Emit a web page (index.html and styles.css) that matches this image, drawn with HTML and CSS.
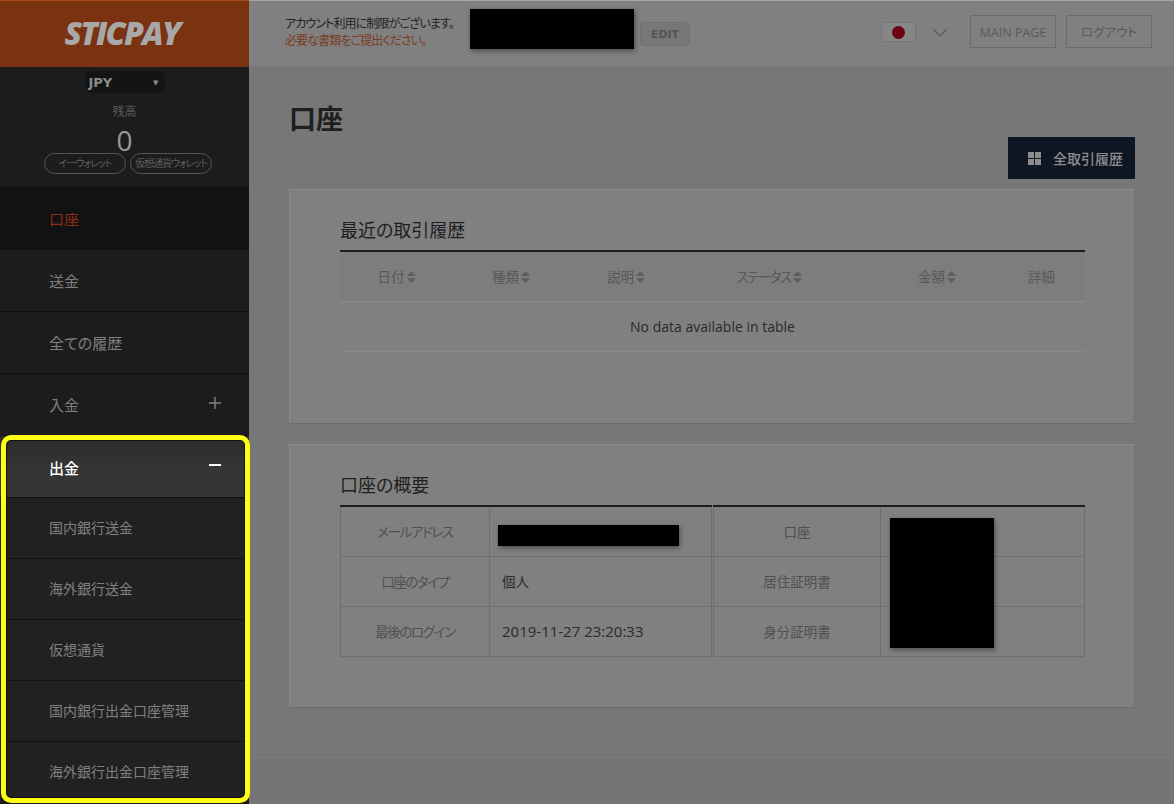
FILE: index.html
```html
<!DOCTYPE html>
<html lang="ja">
<head>
    <meta charset="UTF-8">
    <title>STICPAY 口座</title>
    <link rel="stylesheet" href="styles.css">
</head>
<body>
    <div class="page">
        <aside class="sidebar">
            <div class="logo"><span>STICPAY</span></div>
            <div class="wallet">
                <div class="currency"><span>JPY</span><i>▼</i></div>
                <div class="balance-label">残高</div>
                <div class="balance">0</div>
                <div class="wallet-pills">
                    <span class="pill">イーウォレット</span>
                    <span class="pill">仮想通貨ウォレット</span>
                </div>
            </div>
            <nav class="nav">
                <a class="nav-item active">口座</a>
                <a class="nav-item">送金</a>
                <a class="nav-item">全ての履歴</a>
                <a class="nav-item">入金<svg class="nav-sign" viewBox="0 0 14 14"><path d="M7 1v12M1 7h12"/></svg></a>
                <div class="nav-group">
                    <a class="nav-item open">出金<svg class="nav-sign minus" viewBox="0 0 14 14"><path d="M1 7h12"/></svg></a>
                    <a class="nav-item sub">国内銀行送金</a>
                    <a class="nav-item sub">海外銀行送金</a>
                    <a class="nav-item sub">仮想通貨</a>
                    <a class="nav-item sub">国内銀行出金口座管理</a>
                    <a class="nav-item sub">海外銀行出金口座管理</a>
                </div>
            </nav>
        </aside>

        <div class="main">
            <header class="topbar">
                <div class="notice">
                    <p>アカウント利用に制限がございます。</p>
                    <p class="notice-red">必要な書類をご提出ください。</p>
                </div>
                <div class="blackout top-name"></div>
                <button class="edit-btn">EDIT</button>
                <div class="topbar-right">
                    <div class="flag"><span></span></div>
                    <svg class="chevron" viewBox="0 0 16 9"><path d="M1 1l7 7 7-7"/></svg>
                    <a class="top-btn">MAIN PAGE</a>
                    <a class="top-btn">ログアウト</a>
                </div>
            </header>

            <section class="content">
                <h1>口座</h1>
                <div class="actions">
                    <a class="history-btn">
                        <svg viewBox="0 0 13 13"><path d="M0 0h6v6H0zM7 0h6v6H7zM0 7h6v6H0zM7 7h6v6H7z"/></svg>
                        全取引履歴
                    </a>
                </div>

                <div class="card recent">
                    <h2>最近の取引履歴</h2>
                    <table class="history">
                        <colgroup>
                            <col class="c1"><col class="c2"><col class="c3"><col class="c4"><col class="c5"><col class="c6">
                        </colgroup>
                        <thead>
                            <tr>
                                <th>日付<svg class="sort" viewBox="0 0 9 12"><path d="M4.5 0L9 5H0zM4.5 12L0 7h9z"/></svg></th>
                                <th>種類<svg class="sort" viewBox="0 0 9 12"><path d="M4.5 0L9 5H0zM4.5 12L0 7h9z"/></svg></th>
                                <th>説明<svg class="sort" viewBox="0 0 9 12"><path d="M4.5 0L9 5H0zM4.5 12L0 7h9z"/></svg></th>
                                <th class="status">ステータス<svg class="sort" viewBox="0 0 9 12"><path d="M4.5 0L9 5H0zM4.5 12L0 7h9z"/></svg></th>
                                <th>金額<svg class="sort" viewBox="0 0 9 12"><path d="M4.5 0L9 5H0zM4.5 12L0 7h9z"/></svg></th>
                                <th class="last">詳細</th>
                            </tr>
                        </thead>
                        <tbody>
                            <tr><td colspan="6">No data available in table</td></tr>
                        </tbody>
                    </table>
                </div>

                <div class="card summary">
                    <h2>口座の概要</h2>
                    <div class="summary-tables">
                        <table class="info left">
                            <tr><th>メールアドレス</th><td><div class="blackout mail"></div></td></tr>
                            <tr><th>口座のタイプ</th><td>個人</td></tr>
                            <tr><th>最後のログイン</th><td class="date">2019-11-27 23:20:33</td></tr>
                        </table>
                        <table class="info right">
                            <tr><th>口座</th><td></td></tr>
                            <tr><th>居住証明書</th><td></td></tr>
                            <tr><th>身分証明書</th><td></td></tr>
                        </table>
                        <div class="blackout docs"></div>
                    </div>
                </div>
            </section>
            <footer class="footer"></footer>
        </div>
    </div>
</body>
</html>
```

FILE: styles.css
```css
*, *::after {
    box-sizing: border-box;
}

body {
    margin: 0;
    height: 804px;
    overflow: hidden;
    background-color: #777;
    font-family: 'Open Sans', 'Noto Sans CJK JP', sans-serif;
    font-feature-settings: "palt";
    color: #222;
}

p, h1, h2 {
    margin: 0;
}

.page {
    display: flex;
    height: 804px;
}

/* sidebar */
.sidebar {
    width: 249px;
    flex-shrink: 0;
    background-color: #1c1c1c;
    color: #808080;
}

.logo {
    height: 67px;
    background-color: #7b3210;
    border-top: 1px solid #a8481a;
    padding: 0 5px 4px 0;
    display: flex;
    align-items: center;
    justify-content: center;
}

.logo span {
    font-family: 'Open Sans', sans-serif;
    font-weight: 800;
    font-style: italic;
    font-size: 32px;
    letter-spacing: -1.8px;
    color: #a8a8a8;
}

.wallet {
    height: 120px;
    padding-top: 4px;
    display: flex;
    flex-direction: column;
    align-items: center;
}

.currency {
    width: 80px;
    height: 22px;
    background-color: #141414;
    border-radius: 6px;
    padding: 1px 6px 0 4px;
    display: flex;
    align-items: center;
    justify-content: space-between;
    font-family: 'DejaVu Sans', sans-serif;
    font-size: 13px;
    font-weight: bold;
    color: #8c8c8c;
}

.currency i {
    font-style: normal;
    font-size: 7px;
}

.balance-label {
    margin-top: 10px;
    font-size: 12px;
    line-height: 18px;
    color: #5a5a5a;
}

.balance {
    margin-top: 5px;
    height: 27px;
    font-size: 28px;
    line-height: 28px;
    color: #999;
}

.wallet-pills {
    display: flex;
    gap: 4px;
    margin-left: 7px;
}

.pill {
    width: 82px;
    height: 21px;
    border: 1px solid #555;
    border-radius: 11px;
    font-size: 10px;
    letter-spacing: -1px;
    line-height: 19px;
    text-align: center;
    color: #5f5f5f;
    white-space: nowrap;
}

.nav-item {
    height: 62px;
    padding-left: 49px;
    display: flex;
    align-items: center;
    justify-content: space-between;
    border-bottom: 1px solid #111;
    font-size: 15px;
    color: #808080;
}

.nav-item.active {
    height: 63px;
    padding-top: 1px;
    background-color: #121212;
    color: #8c2c12;
}

.nav-sign {
    width: 14px;
    height: 14px;
    margin: -4px 27px 0 0;
    fill: none;
    stroke: #808080;
    stroke-width: 1.5;
}

.nav-sign.minus {
    margin-top: -6px;
    stroke: #fff;
    stroke-width: 2;
}

.nav-group {
    position: relative;
}

/* yellow frame drawn over the open group */
.nav-group::after {
    content: "";
    position: absolute;
    top: -1px;
    left: 1px;
    width: 249px;
    height: 368px;
    border: 5px solid #ffff14;
    border-radius: 10px;
    box-shadow: inset 0 0 0 1px #111;
}

.nav-item.open {
    height: 62px;
    padding-top: 2px;
    background: linear-gradient(#2a2a2a, #353535 50%);
    color: #fff;
    font-weight: 500;
}

.nav-item.sub {
    height: 61px;
    padding-bottom: 2px;
    background-color: #212121;
    font-size: 14px;
}

/* main column */
.main {
    flex: 1;
    display: flex;
    flex-direction: column;
    min-width: 0;
}

.topbar {
    height: 67px;
    flex-shrink: 0;
    background-color: #808080;
    border-top: 1px solid #a5a5a5;
    border-bottom: 1px solid #777;
    display: flex;
    align-items: flex-start;
    padding-left: 36px;
}

.notice {
    width: 185px;
    margin-top: 14px;
    font-size: 12px;
    letter-spacing: -0.9px;
    line-height: 17px;
    color: #222;
    white-space: nowrap;
}

.notice-red {
    color: #7b3a1e;
}

.blackout {
    background-color: #000;
    box-shadow: 1px 2px 5px rgba(0, 0, 0, 0.4);
}

.top-name {
    width: 164px;
    height: 40px;
    margin-top: 8px;
}

.edit-btn {
    width: 50px;
    height: 24px;
    margin: 21px 0 0 6px;
    padding: 1px 0 0;
    background-color: #777;
    border: 1px solid #707070;
    border-radius: 4px;
    font-family: 'DejaVu Sans', sans-serif;
    font-size: 11px;
    font-weight: bold;
    color: #555;
}

.topbar-right {
    margin-left: auto;
    margin-right: 22px;
    display: flex;
    align-items: flex-start;
}

.flag {
    width: 35px;
    height: 20px;
    margin-top: 21px;
    background-color: #868686;
    border: 1px solid #777;
    display: flex;
    align-items: center;
    justify-content: center;
}

.flag span {
    width: 13px;
    height: 13px;
    border-radius: 50%;
    background-color: #6a0410;
}

.chevron {
    width: 16px;
    height: 9px;
    margin: 27px 22px 0 16px;
    fill: none;
    stroke: #5f5f5f;
    stroke-width: 1.5;
}

.top-btn {
    width: 86px;
    height: 33px;
    margin-top: 14px;
    border: 1px solid #6b6b6b;
    font-size: 12.5px;
    line-height: 33px;
    text-align: center;
    color: #5a5a5a;
}

.top-btn + .top-btn {
    margin-left: 10px;
}

.content {
    flex: 1;
    padding: 0 39px 0 40px;
}

h1 {
    height: 70px;
    padding-top: 33px;
    font-size: 27px;
    line-height: 38px;
    font-weight: 700;
    color: #1f1f1f;
}

.actions {
    display: flex;
    justify-content: flex-end;
}

.history-btn {
    width: 127px;
    height: 42px;
    background-color: #0e1624;
    display: flex;
    align-items: center;
    padding-left: 20px;
    gap: 12px;
    font-size: 14px;
    font-weight: 500;
    color: #8d8d8d;
    white-space: nowrap;
}

.history-btn svg {
    width: 13px;
    height: 13px;
    fill: #8d8d8d;
}

.card {
    margin-top: 10px;
    background-color: #808080;
    border: 1px solid;
    border-color: #8a8a8a #727272 #6c6c6c #8a8a8a;
    padding: 0 50px;
}

.card.recent {
    height: 235px;
}

.card.summary {
    height: 264px;
    margin-top: 20px;
}

h2 {
    font-size: 18px;
    line-height: 27px;
    font-weight: 400;
    color: #1f1f1f;
    padding-top: 27px;
    height: 60px;
}

.recent table {
    width: 745px;
    border-collapse: collapse;
    table-layout: fixed;
    border-top: 2px solid #1e1e1e;
}

.c1 { width: 113px; }
.c2 { width: 116px; }
.c3 { width: 114px; }
.c4 { width: 172px; }
.c5 { width: 164px; }
.c6 { width: 66px; }

.history th {
    height: 50px;
    background-color: #7d7d7d;
    border-bottom: 1px solid #8a8a8a;
    font-size: 13.5px;
    font-weight: 400;
    color: #585858;
}

.history th.status {
    letter-spacing: -1.5px;
}

.history th.last {
    padding-right: 22px;
}

.sort {
    width: 9px;
    height: 12px;
    margin-left: 2px;
    vertical-align: -1px;
    fill: #5f5f5f;
}

.history td {
    height: 50px;
    border-bottom: 1px solid #8a8a8a;
    text-align: center;
    font-size: 14px;
    color: #2a2a2a;
}

.summary-tables {
    position: relative;
    display: flex;
    gap: 1px;
    width: 745px;
}

.info {
    border-collapse: collapse;
    border-top: 2px solid #1e1e1e;
    table-layout: fixed;
}

.info.left,
.info.right {
    width: 372px;
}

.info th,
.info td {
    height: 50px;
    border: 1px solid #6f6f6f;
    font-size: 13.5px;
    font-weight: 400;
}

.info tr:first-child th,
.info tr:first-child td {
    border-top: none;
}

.info th {
    color: #505050;
}

.info.left th {
    width: 149px;
    letter-spacing: -1.4px;
}

.info.right th {
    width: 167px;
}

.info td {
    padding-left: 12px;
    color: #2a2a2a;
}

.info td.date {
    font-size: 15px;
}

.blackout.mail {
    position: relative;
    top: 4px;
    left: -4px;
    width: 181px;
    height: 21px;
}

/* covers the value cells of the right-hand table */
.blackout.docs {
    position: absolute;
    top: 13px;
    left: 550px;
    width: 104px;
    height: 130px;
}

.footer {
    height: 47px;
    flex-shrink: 0;
    background-color: #757575;
    border-top: 1px solid #7c7c7c;
}
```
